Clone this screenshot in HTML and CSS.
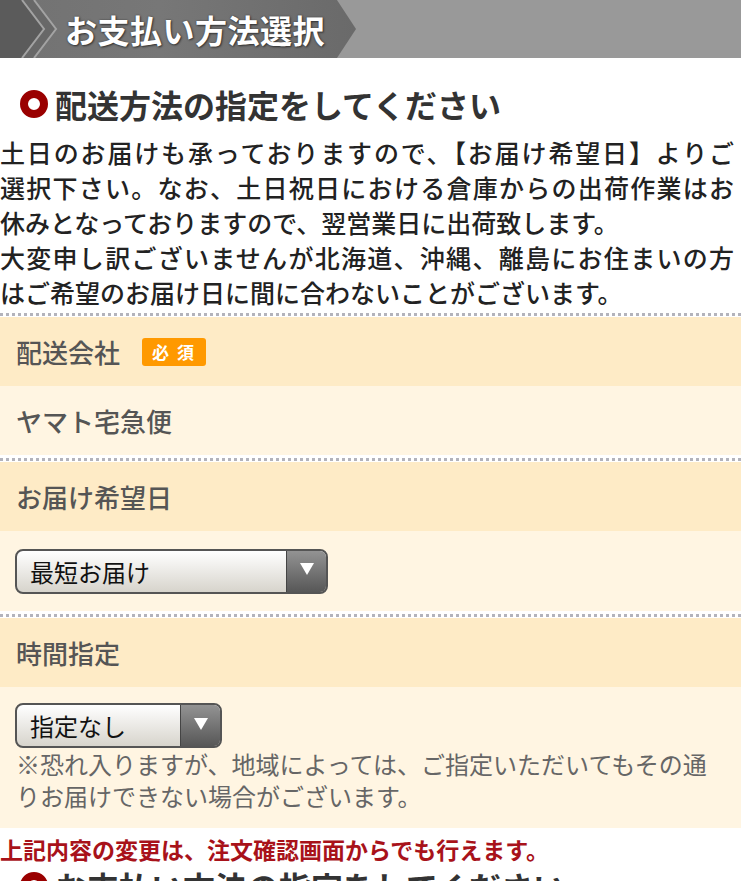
FILE: index.html
```html
<!DOCTYPE html>
<html lang="ja">
<head>
<meta charset="utf-8">
<title>お支払い方法選択</title>
<link rel="stylesheet" href="styles.css">
</head>
<body>
<header class="page-head">
  <div class="head-arrow">
    <svg class="chevrons" width="60" height="58" viewBox="0 0 60 58">
      <polygon points="0,0 22,0 44,29 22,58 0,58" fill="#5b5b5b"/>
      <polygon points="22,0 34,0 56,29 34,58 22,58 44,29" fill="#686868"/>
      <polyline points="22,0 44,29 22,58" fill="none" stroke="#a3a3a3" stroke-width="2"/>
      <polyline points="34,0 56,29 34,58" fill="none" stroke="#a3a3a3" stroke-width="2"/>
    </svg>
    <h1 class="head-title">お支払い方法選択</h1>
  </div>
</header>

<main class="content">
  <h2 class="sec-title"><span class="ring"></span>配送方法の指定をしてください</h2>
  <p class="intro">
    <span class="ln jl">土日のお届けも承っておりますので、【お届け希望日】よりご</span>
    <span class="ln jl">選択下さい。なお、土日祝日における倉庫からの出荷作業はお</span>
    <span class="ln">休みとなっておりますので、翌営業日に出荷致します。</span>
    <span class="ln jl">大変申し訳ございませんが北海道、沖縄、離島にお住まいの方</span>
    <span class="ln">はご希望のお届け日に間に合わないことがございます。</span>
  </p>

  <div class="sep"></div>
  <div class="field-head">配送会社<span class="badge">必 須</span></div>
  <div class="field-val">ヤマト宅急便</div>

  <div class="sep"></div>
  <div class="field-head">お届け希望日</div>
  <div class="field-val field-val-select">
    <div class="select select-wide">
      <span class="select-text">最短お届け</span>
      <span class="select-btn"><svg width="14" height="12" viewBox="0 0 14 12"><polygon points="0,0 14,0 7,12" fill="#fff"/></svg></span>
    </div>
  </div>

  <div class="sep"></div>
  <div class="field-head">時間指定</div>
  <div class="field-val field-val-time">
    <div class="select select-narrow">
      <span class="select-text">指定なし</span>
      <span class="select-btn"><svg width="14" height="12" viewBox="0 0 14 12"><polygon points="0,0 14,0 7,12" fill="#fff"/></svg></span>
    </div>
    <p class="note">※恐れ入りますが、地域によっては、ご指定いただいてもその通りお届けできない場合がございます。</p>
  </div>

  <p class="change-note">上記内容の変更は、注文確認画面からでも行えます。</p>
  <h2 class="sec-title sec-title-next"><span class="ring"></span>お支払い方法の指定をしてください</h2>
</main>
</body>
</html>
```

FILE: styles.css
```css
html, body {
  margin: 0;
  padding: 0;
  background: #fff;
}

body {
  font-family: "Noto Sans CJK JP", "Noto Sans", sans-serif;
  color: #333;
  width: 741px;
  overflow: hidden;
}

.page-head {
  height: 58px;
  background: #999999;
  display: flex;
}

.head-arrow {
  width: 356px;
  height: 58px;
  display: flex;
  align-items: center;
  background: linear-gradient(to right, #727272 0%, #777 45%, #6a6a6a 100%);
  clip-path: polygon(0 0, 337px 0, 356px 50%, 337px 100%, 0 100%);
}

.chevrons {
  display: block;
  flex: none;
}

.head-title {
  margin: 0 0 0 5px;
  font-size: 32px;
  font-weight: 700;
  color: #fff;
  line-height: 58px;
  letter-spacing: 0.5px;
  text-shadow: 1px 1px 2px #333, 0 0 2px #444;
}

.content {
  padding-top: 26px;
}

.sec-title {
  margin: 0 0 11px 0;
  padding-left: 20px;
  display: flex;
  align-items: center;
  font-size: 32px;
  line-height: 40px;
  font-weight: 700;
  color: #333;
}

.sec-title-next {
  margin-top: 3px;
}

.ring {
  width: 28px;
  height: 28px;
  box-sizing: border-box;
  border: 8px solid #9a0000;
  border-radius: 50%;
  background: #fff;
  margin-right: 7px;
  flex: none;
}

.intro {
  margin: 0 0 3px 0;
  width: 734px;
  font-size: 25px;
  line-height: 35px;
  font-weight: 500;
  color: #222;
}

.ln {
  display: block;
  white-space: nowrap;
}

.jl {
  text-align: justify;
  text-align-last: justify;
}

.sep {
  height: 0;
  border-top: 3px dotted #b3b3bb;
  margin: 3px 0 1px 0;
}

.field-head {
  height: 69px;
  background: #feebc6;
  display: flex;
  align-items: center;
  padding-left: 16px;
  font-size: 26px;
  font-weight: 500;
  color: #555;
}

.badge {
  margin-left: 22px;
  width: 64px;
  height: 28px;
  border-radius: 3px;
  background: #ff9900;
  color: #fff;
  font-size: 17px;
  font-weight: 700;
  display: flex;
  align-items: center;
  justify-content: center;
  letter-spacing: 2px;
}

.field-val {
  background: #fff5e2;
  min-height: 69px;
  display: flex;
  align-items: center;
  padding-left: 16px;
  font-size: 26px;
  font-weight: 500;
  color: #555;
}

.field-val-select {
  height: 80px;
  padding-left: 15px;
}

.field-val-time {
  display: block;
  padding: 16px 16px 16px 15px;
}

.select {
  height: 45px;
  box-sizing: border-box;
  border: 2px solid #555;
  border-radius: 8px;
  display: flex;
  overflow: hidden;
  background: linear-gradient(#ffffff, #d7d4cc);
}

.select-wide {
  width: 313px;
}

.select-narrow {
  width: 207px;
}

.select-text {
  flex: 1;
  padding-left: 13px;
  font-size: 24px;
  line-height: 41px;
  font-weight: 400;
  color: #111;
}

.select-btn {
  width: 39px;
  border-left: 1px solid #444;
  background: linear-gradient(#939393, #575757);
  display: flex;
  align-items: center;
  justify-content: center;
}

.select-btn svg {
  display: block;
  margin-top: -4px;
}

.note {
  margin: 0;
  padding-left: 1px;
  font-size: 24px;
  line-height: 32px;
  font-weight: 400;
  color: #666;
}

.change-note {
  margin: 7px 0 0 0;
  font-size: 23px;
  line-height: 28px;
  font-weight: 700;
  color: #a8121a;
}
```
